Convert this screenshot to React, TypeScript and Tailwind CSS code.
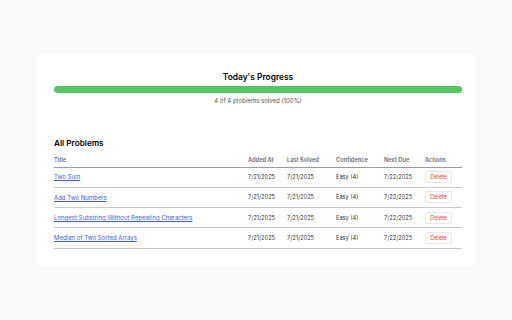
const problems = [
  { title: 'Two Sum' },
  { title: 'Add Two Numbers' },
  { title: 'Longest Substring Without Repeating Characters' },
  { title: 'Median of Two Sorted Arrays' },
];

export default function App() {
  return (
    <div className="min-h-[320px] w-[512px] bg-[#fafafa] pt-[54px] font-['Inter',sans-serif]">
      <div className="mx-[36px] bg-white pl-[18px] pr-[14px] pt-[16px] pb-[17px]">
        <div className="text-center">
          <h2 className="text-[8.4px] leading-[14px] font-semibold text-black">Today's Progress</h2>
          <div className="mt-[2px] h-[7px] w-full rounded-full bg-[#52c665]" />
          <p className="mt-[3px] text-[6px] leading-[9px] text-[#555]">4 of 4 problems solved (100%)</p>
        </div>

        <h3 className="mt-[32px] text-[8.2px] leading-[12px] font-semibold text-black">All Problems</h3>
        <table className="mt-[6px] w-full border-collapse text-left text-[5.7px]">
          <thead>
            <tr className="border-b-[1.5px] border-[#9a9aa3] text-[#6a6a75]">
              <th className="pt-[1px] pb-[2px] font-semibold">Title</th>
              <th className="w-[39px] pt-[1px] pb-[2px] font-semibold">Added At</th>
              <th className="w-[49px] pt-[1px] pb-[2px] font-semibold">Last Solved</th>
              <th className="w-[48px] pt-[1px] pb-[2px] font-semibold">Confidence</th>
              <th className="w-[41px] pt-[1px] pb-[2px] font-semibold">Next Due</th>
              <th className="w-[37px] pt-[1px] pb-[2px] font-semibold">Actions</th>
            </tr>
          </thead>
          <tbody>
            {problems.map((p) => (
              <tr key={p.title} className="h-[20.3px] border-b-[1.5px] border-[#c9c9cc] text-[#333]">
                <td>
                  <a href="#" className="text-[6px] text-[#3b63d8] underline">
                    {p.title}
                  </a>
                </td>
                <td>7/21/2025</td>
                <td>7/21/2025</td>
                <td>Easy (4)</td>
                <td>7/22/2025</td>
                <td>
                  <button
                    type="button"
                    className="h-[12px] w-[27px] rounded-[2px] border border-[#e8e8e8] bg-white text-[5.5px] text-[#ef4444]"
                  >
                    Delete
                  </button>
                </td>
              </tr>
            ))}
          </tbody>
        </table>
      </div>
    </div>
  );
}
